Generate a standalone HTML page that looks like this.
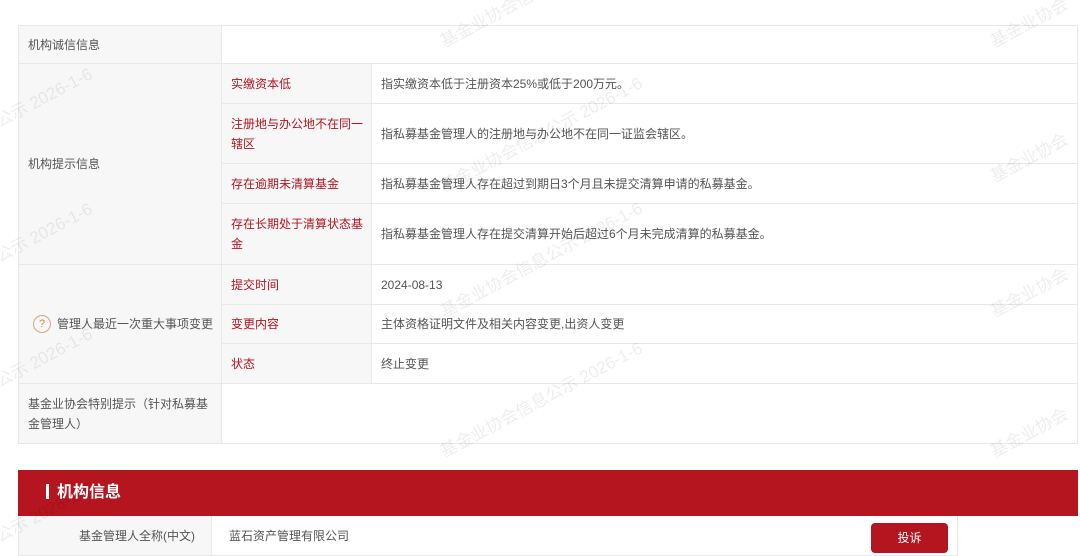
<!DOCTYPE html>
<html><head><meta charset="utf-8"><style>
body{margin:0;width:1080px;height:550px;overflow:hidden;background:#fff;font-family:"Liberation Sans","Noto Sans CJK SC",sans-serif;font-size:12px;color:#555;position:relative}
.c{position:absolute;box-sizing:border-box;border-right:1px solid #e8e8e8;border-bottom:1px solid #e8e8e8;display:flex;align-items:center;padding:0 0 0 9px;line-height:20px}
.g{background:#f7f7f7}
.r{color:#b5151f}
.wm{position:absolute;color:rgba(0,0,0,0.07);font-size:17px;transform:rotate(-28deg);white-space:nowrap;transform-origin:left top}
</style></head><body>
<div style="position:absolute;left:18px;top:25px;width:1060px;height:419px;border-top:1px solid #e8e8e8;border-left:1px solid #e8e8e8;box-sizing:border-box"></div>
<div class="c g" style="left:18px;top:25px;width:204px;height:39px;border-left:1px solid #e8e8e8;border-top:1px solid #e8e8e8">机构诚信信息</div>
<div class="c" style="left:222px;top:25px;width:856px;height:39px;border-top:1px solid #e8e8e8"></div>
<div class="c g" style="left:18px;top:64px;width:204px;height:201px;border-left:1px solid #e8e8e8">机构提示信息</div>
<div class="c g r" style="left:222px;top:64px;width:150px;height:40px">实缴资本低</div>
<div class="c" style="left:372px;top:64px;width:706px;height:40px">指实缴资本低于注册资本25%或低于200万元。</div>
<div class="c g r" style="left:222px;top:104px;width:150px;height:60px">注册地与办公地不在同一辖区</div>
<div class="c" style="left:372px;top:104px;width:706px;height:60px">指私募基金管理人的注册地与办公地不在同一证监会辖区。</div>
<div class="c g r" style="left:222px;top:164px;width:150px;height:40px">存在逾期未清算基金</div>
<div class="c" style="left:372px;top:164px;width:706px;height:40px">指私募基金管理人存在超过到期日3个月且未提交清算申请的私募基金。</div>
<div class="c g r" style="left:222px;top:204px;width:150px;height:61px">存在长期处于清算状态基金</div>
<div class="c" style="left:372px;top:204px;width:706px;height:61px">指私募基金管理人存在提交清算开始后超过6个月未完成清算的私募基金。</div>
<div class="c g" style="left:18px;top:265px;width:204px;height:119px;border-left:1px solid #e8e8e8;padding-left:14px;white-space:nowrap"><span style="display:inline-block;flex:none;width:16px;height:16px;border:1px solid #d9a77a;border-radius:50%;color:#c9874a;font-size:11px;line-height:16px;text-align:center;margin-right:6px">?</span>管理人最近一次重大事项变更</div>
<div class="c g r" style="left:222px;top:265px;width:150px;height:40px">提交时间</div>
<div class="c" style="left:372px;top:265px;width:706px;height:40px">2024-08-13</div>
<div class="c g r" style="left:222px;top:305px;width:150px;height:39px">变更内容</div>
<div class="c" style="left:372px;top:305px;width:706px;height:39px">主体资格证明文件及相关内容变更,出资人变更</div>
<div class="c g r" style="left:222px;top:344px;width:150px;height:40px">状态</div>
<div class="c" style="left:372px;top:344px;width:706px;height:40px">终止变更</div>
<div class="c g" style="left:18px;top:384px;width:204px;height:60px;border-left:1px solid #e8e8e8;padding-right:8px">基金业协会特别提示（针对私募基金管理人）</div>
<div class="c" style="left:222px;top:384px;width:856px;height:60px"></div>
<div style="position:absolute;left:18px;top:470px;width:1060px;height:46px;background:#b5151f;color:#fff;font-size:16px;font-weight:bold;line-height:46px"><span style="display:inline-block;width:3px;height:15px;background:#fff;margin:0 8px 0 28px;vertical-align:-2px"></span>机构信息</div>
<div class="c g" style="left:18px;top:516px;width:194px;height:40px;border-left:1px solid #e8e8e8;justify-content:flex-end;padding-right:16px">基金管理人全称(中文)</div>
<div class="c" style="left:212px;top:516px;width:746px;height:40px;padding-left:17px">蓝石资产管理有限公司</div>
<div style="position:absolute;left:871px;top:523px;width:77px;height:30px;background:#b5151f;border-radius:4px;color:#fff;text-align:center;line-height:30px">投诉</div>
<div class="wm" style="left:-10px;top:110px">公示 2026-1-6</div>
<div class="wm" style="left:-10px;top:245px">公示 2026-1-6</div>
<div class="wm" style="left:-10px;top:370px">公示 2026-1-6</div>
<div class="wm" style="left:-10px;top:525px">公示 2026-1-6</div>
<div class="wm" style="left:435px;top:30px">基金业协会信息公示 2026-1-6</div>
<div class="wm" style="left:435px;top:175px">基金业协会信息公示 2026-1-6</div>
<div class="wm" style="left:435px;top:300px">基金业协会信息公示 2026-1-6</div>
<div class="wm" style="left:435px;top:440px">基金业协会信息公示 2026-1-6</div>
<div class="wm" style="left:985px;top:30px">基金业协会</div>
<div class="wm" style="left:985px;top:165px">基金业协会</div>
<div class="wm" style="left:985px;top:300px">基金业协会</div>
<div class="wm" style="left:985px;top:440px">基金业协会</div>
</body></html>
